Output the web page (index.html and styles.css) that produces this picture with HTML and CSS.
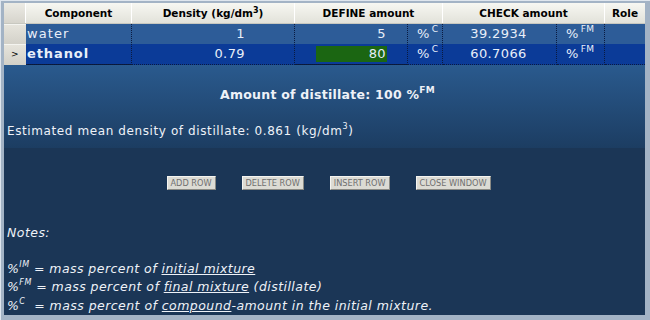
FILE: index.html
```html
<!DOCTYPE html>
<html>
<head>
<meta charset="utf-8">
<link rel="stylesheet" href="styles.css">
</head>
<body>
<div class="panel">
  <div class="grid head">
    <div class="corner"></div>
    <div class="hcell">Component</div>
    <div class="hcell">Density (kg/dm<sup>3</sup>)</div>
    <div class="hcell span2">DEFINE amount</div>
    <div class="hcell span2">CHECK amount</div>
    <div class="hcell">Role</div>
  </div>
  <div class="grid row row-water">
    <div class="rh"></div>
    <div class="cell name">water</div>
    <div class="cell dens">1</div>
    <div class="cell def"><span class="inp">5</span></div>
    <div class="cell unit">%<sup>C</sup></div>
    <div class="cell chk">39.2934</div>
    <div class="cell unit">%<sup>FM</sup></div>
    <div class="cell last"></div>
  </div>
  <div class="grid row row-eth">
    <div class="rh">&gt;</div>
    <div class="cell name bold">ethanol</div>
    <div class="cell dens">0.79</div>
    <div class="cell def"><span class="inp green">80</span></div>
    <div class="cell unit">%<sup>C</sup></div>
    <div class="cell chk">60.7066</div>
    <div class="cell unit">%<sup>FM</sup></div>
    <div class="cell last"></div>
  </div>
  <div class="summary">
    <div class="amount">Amount of distillate: 100 %<sup>FM</sup></div>
    <div class="density">Estimated mean density of distillate: 0.861 (kg/dm<sup>3</sup>)</div>
  </div>
  <div class="lower">
    <div class="buttons">
      <span class="btn">ADD ROW</span>
      <span class="btn">DELETE ROW</span>
      <span class="btn">INSERT ROW</span>
      <span class="btn">CLOSE WINDOW</span>
    </div>
    <div class="notes">
      <div class="notes-title">Notes:</div>
      <div class="note">%<sup>IM</sup> = mass percent of <u>initial mixture</u></div>
      <div class="note">%<sup>FM</sup> = mass percent of <u>final mixture</u> (distillate)</div>
      <div class="note">%<sup>C</sup>&nbsp; = mass percent of <u>compound</u>-amount in the initial mixture.</div>
    </div>
  </div>
</div>
</body>
</html>
```

FILE: styles.css
```css
html, body { margin: 0; padding: 0; }
body {
  width: 650px;
  height: 320px;
  box-sizing: border-box;
  background: #a3b3c5;
  border-left: 1px solid #dfe6ee;
  border-top: 1px solid #dfe6ee;
  padding: 2px 5px 5px 3px;
  font-family: "DejaVu Sans", Verdana, sans-serif;
  overflow: hidden;
}
.panel {
  width: 641px;
  height: 312px;
  display: flex;
  flex-direction: column;
  background: #1b3656;
}
.grid {
  display: grid;
  grid-template-columns: 22px 106px 163px 113px 35px 114px 48px 40px;
}
.head {
  height: 20px;
  background: linear-gradient(#f7f7f2, #e2e2da);
  border-bottom: 1px solid #c8c8c0;
}
.corner {
  background: linear-gradient(#ecebe5, #d6d4cc);
  border-right: 1px solid #fff;
}
.hcell {
  font-size: 10.5px;
  font-weight: bold;
  color: #000;
  text-align: center;
  line-height: 20px;
  border-right: 1px solid #fff;
  white-space: nowrap;
}
.hcell sup { font-size: 8px; line-height: 0; }
.hcell:last-child { border-right: none; }
.span2 { grid-column: span 2; }
.row {
  height: 20px;
  color: #e8eef8;
  font-size: 13px;
  letter-spacing: 0.4px;
  line-height: 20px;
}
.row-water { background: #2d5c98; }
.row-eth { background: #0b3b98; border-bottom: 1px dotted #0a1838; }
.rh {
  background: linear-gradient(#e6e4dc, #d2d0c8);
  border-top: 1px solid #f4f4f0;
  box-sizing: border-box;
  color: #000;
  font-size: 9px;
  text-align: center;
  line-height: 18px;
}
.cell {
  border-right: 1px dotted #0a1a40;
  border-bottom: 1px dotted #0a1a40;
  box-sizing: border-box;
  white-space: nowrap;
}
.cell.last { border-right: none; }
.name { padding-left: 1px; letter-spacing: 1.1px; }
.bold { font-weight: bold; letter-spacing: 0.9px; }
.dens { text-align: right; padding-right: 49px; }
.def {
  display: flex;
  justify-content: flex-end;
  align-items: center;
  padding-right: 20px;
}
.inp {
  width: 71px;
  height: 16px;
  line-height: 16px;
  text-align: right;
  padding-right: 1px;
  box-sizing: border-box;
}
.inp.green { background: #1b6612; }
.unit { padding-left: 9px; }
.unit sup { font-size: 9px; line-height: 0; vertical-align: 6px; margin-left: 2px; }
.chk { text-align: center; padding-right: 2px; }
.summary {
  height: 85px;
  background: linear-gradient(#2a5a8e, #1c3d62);
  box-sizing: border-box;
  padding-top: 22px;
  color: #eef2f8;
}
.amount {
  text-align: center;
  font-weight: bold;
  font-size: 12.5px;
  line-height: 16px;
  padding-left: 6px;
  letter-spacing: 0.25px;
}
.amount sup { font-size: 9px; line-height: 0; vertical-align: 6px; }
.density {
  margin-top: 20px;
  padding-left: 3px;
  font-size: 12px;
  line-height: 16px;
  letter-spacing: 0.6px;
}
.density sup { font-size: 8px; line-height: 0; vertical-align: 6px; }
.lower {
  flex: 1;
  padding-top: 28px;
  color: #eef2f8;
}
.buttons {
  display: flex;
  justify-content: center;
  gap: 26px;
  padding-left: 8px;
}
.btn {
  height: 14px;
  box-sizing: border-box;
  padding: 0 3px;
  font-size: 8.2px;
  line-height: 12px;
  color: #707070;
  background: #dcdbd4;
  border: 1px solid;
  border-color: #f4f4f0 #8a8a84 #8a8a84 #f4f4f0;
}
.notes {
  margin-top: 34px;
  padding-left: 3px;
  font-style: italic;
  font-size: 12.5px;
  line-height: 18.5px;
  letter-spacing: 0.45px;
}
.notes-title { margin-bottom: 17px; }
.note sup { font-size: 8px; line-height: 0; vertical-align: 6px; }
```
